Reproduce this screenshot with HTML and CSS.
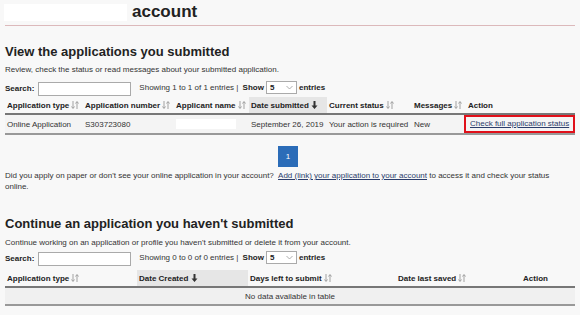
FILE: index.html
```html
<!DOCTYPE html>
<html lang="en">

<head>
    <meta charset="UTF-8">
    <meta name="viewport" content="width=device-width, initial-scale=1.0">
    <title>Account</title>
    <link rel="stylesheet" href="styles.css">
</head>

<body>
    <div class="page">
        <h1 class="page-title"><span class="redacted redacted-name"></span>account</h1>

        <section class="block block-submitted">
            <h2>View the applications you submitted</h2>
            <p class="intro">Review, check the status or read messages about your submitted application.</p>

            <div class="toolbar">
                <label class="search">Search: <input type="text"></label>
                <span class="info">Showing 1 to 1 of 1 entries | <b>Show</b>
                    <span class="select">5<svg width="7" height="5" viewBox="0 0 7 5"><path d="M0.5 1 L3.5 4 L6.5 1" fill="none" stroke="#999" stroke-width="0.8"/></svg></span>
                    <b>entries</b></span>
            </div>

            <table class="grid">
                <colgroup>
                    <col style="width:78px">
                    <col style="width:91px">
                    <col style="width:75px">
                    <col style="width:78px">
                    <col style="width:85px">
                    <col style="width:54px">
                    <col>
                </colgroup>
                <thead>
                    <tr>
                        <th>Application type <svg class="sort" width="8" height="8" viewBox="0 0 8 8"><path d="M2 0 V7 M0.5 5.5 L2 7.5 L3.5 5.5 M6 8 V1 M4.5 2.5 L6 0.5 L7.5 2.5" fill="none" stroke="#999" stroke-width="0.9"/></svg></th>
                        <th>Application number <svg class="sort" width="8" height="8" viewBox="0 0 8 8"><path d="M2 0 V7 M0.5 5.5 L2 7.5 L3.5 5.5 M6 8 V1 M4.5 2.5 L6 0.5 L7.5 2.5" fill="none" stroke="#999" stroke-width="0.9"/></svg></th>
                        <th>Applicant name <svg class="sort" width="8" height="8" viewBox="0 0 8 8"><path d="M2 0 V7 M0.5 5.5 L2 7.5 L3.5 5.5 M6 8 V1 M4.5 2.5 L6 0.5 L7.5 2.5" fill="none" stroke="#999" stroke-width="0.9"/></svg></th>
                        <th class="sorted">Date submitted <svg class="sort" width="7" height="8" viewBox="0 0 7 8"><path d="M2.5 0 H4.5 V4.5 H6.5 L3.5 8 L0.5 4.5 H2.5 Z" fill="#333"/></svg></th>
                        <th>Current status <svg class="sort" width="8" height="8" viewBox="0 0 8 8"><path d="M2 0 V7 M0.5 5.5 L2 7.5 L3.5 5.5 M6 8 V1 M4.5 2.5 L6 0.5 L7.5 2.5" fill="none" stroke="#999" stroke-width="0.9"/></svg></th>
                        <th>Messages <svg class="sort" width="8" height="8" viewBox="0 0 8 8"><path d="M2 0 V7 M0.5 5.5 L2 7.5 L3.5 5.5 M6 8 V1 M4.5 2.5 L6 0.5 L7.5 2.5" fill="none" stroke="#999" stroke-width="0.9"/></svg></th>
                        <th>Action</th>
                    </tr>
                </thead>
                <tbody>
                    <tr>
                        <td>Online Application</td>
                        <td>S303723080</td>
                        <td><span class="redacted redacted-cell"></span></td>
                        <td>September 26, 2019</td>
                        <td>Your action is required</td>
                        <td>New</td>
                        <td class="action"><a href="#" class="highlight">Check full application status</a></td>
                    </tr>
                </tbody>
            </table>

            <div class="pager"><span class="page-btn">1</span></div>

            <p class="note"><span>Did you apply on paper or don't see your online application in your account?</span> <a href="#">Add (link) your application to your account</a> <span>to access it and check your status</span> <span>online.</span></p>
        </section>

        <section class="block block-draft">
            <h2>Continue an application you haven't submitted</h2>
            <p class="intro">Continue working on an application or profile you haven't submitted or delete it from your account.</p>

            <div class="toolbar">
                <label class="search">Search: <input type="text"></label>
                <span class="info">Showing 0 to 0 of 0 entries | <b>Show</b>
                    <span class="select">5<svg width="7" height="5" viewBox="0 0 7 5"><path d="M0.5 1 L3.5 4 L6.5 1" fill="none" stroke="#999" stroke-width="0.8"/></svg></span>
                    <b>entries</b></span>
            </div>

            <table class="grid">
                <colgroup>
                    <col style="width:132px">
                    <col style="width:111px">
                    <col style="width:148px">
                    <col style="width:100px">
                    <col>
                </colgroup>
                <thead>
                    <tr>
                        <th>Application type <svg class="sort" width="8" height="8" viewBox="0 0 8 8"><path d="M2 0 V7 M0.5 5.5 L2 7.5 L3.5 5.5 M6 8 V1 M4.5 2.5 L6 0.5 L7.5 2.5" fill="none" stroke="#999" stroke-width="0.9"/></svg></th>
                        <th class="sorted">Date Created <svg class="sort" width="7" height="8" viewBox="0 0 7 8"><path d="M2.5 0 H4.5 V4.5 H6.5 L3.5 8 L0.5 4.5 H2.5 Z" fill="#333"/></svg></th>
                        <th>Days left to submit <svg class="sort" width="8" height="8" viewBox="0 0 8 8"><path d="M2 0 V7 M0.5 5.5 L2 7.5 L3.5 5.5 M6 8 V1 M4.5 2.5 L6 0.5 L7.5 2.5" fill="none" stroke="#999" stroke-width="0.9"/></svg></th>
                        <th>Date last saved <svg class="sort" width="8" height="8" viewBox="0 0 8 8"><path d="M2 0 V7 M0.5 5.5 L2 7.5 L3.5 5.5 M6 8 V1 M4.5 2.5 L6 0.5 L7.5 2.5" fill="none" stroke="#999" stroke-width="0.9"/></svg></th>
                        <th class="center">Action</th>
                    </tr>
                </thead>
                <tbody>
                    <tr>
                        <td colspan="5" class="empty">No data available in table</td>
                    </tr>
                </tbody>
            </table>
        </section>
    </div>
</body>

</html>
```

FILE: styles.css
```css
body {
    margin: 0;
    background: #f8f8f8;
    font-family: 'Liberation Sans', Arial, sans-serif;
    color: #333;
    font-size: 8px;
}

.page {
    padding: 0 5px 0 5px;
}

.page-title {
    margin: 0;
    padding: 2px 0 3px 0;
    font-size: 17px;
    line-height: 20px;
    color: #222;
    border-bottom: 1px solid #dcb9bb;
    display: flex;
    align-items: center;
}

.redacted {
    display: inline-block;
    background: #fff;
}

.redacted-name {
    width: 123px;
    height: 17px;
    margin-left: -1px;
    margin-right: 5px;
}

.redacted-cell {
    width: 60px;
    height: 10px;
    vertical-align: middle;
}

h2 {
    margin: 17px 0 0 0;
    font-size: 13px;
    line-height: 17px;
    color: #222;
}

.block-draft h2 {
    margin-top: 23px;
}

.intro {
    margin: 4px 0 0 0;
    line-height: 11px;
}

.block-draft .intro {
    margin-top: 5px;
}

.toolbar {
    display: flex;
    align-items: center;
    margin-top: 6px;
    height: 15px;
}

.block-draft .toolbar {
    margin-top: 3px;
}

.search {
    font-weight: bold;
    color: #222;
    display: flex;
    align-items: center;
}

.search input {
    width: 93px;
    height: 14px;
    margin: 0 0 0 4px;
    padding: 0;
    border: 1px solid #aaa;
    background: #fff;
    box-sizing: border-box;
}

.info {
    margin-left: 8px;
    margin-top: -2px;
    display: flex;
    align-items: center;
    gap: 2px;
    white-space: pre;
}

.info b {
    color: #222;
}

.select {
    display: inline-flex;
    align-items: center;
    justify-content: space-between;
    width: 31px;
    height: 13px;
    padding: 0 3px 0 3px;
    box-sizing: border-box;
    border: 1px solid #aaa;
    background: #fff;
    font-weight: bold;
    color: #222;
}

.grid {
    width: 570px;
    border-collapse: collapse;
    table-layout: fixed;
    margin-top: 1px;
}

.block-draft .grid {
    margin-top: 4px;
}

.grid th {
    text-align: left;
    font-weight: bold;
    color: #222;
    height: 16px;
    padding: 0 2px;
    border-bottom: 2px solid #777;
    white-space: nowrap;
}

.grid th.sorted {
    background: #e6e6e6;
}

.grid th.center {
    text-align: center;
}

.grid td {
    height: 18px;
    padding: 0 2px;
    border-bottom: 2px solid #999;
    white-space: nowrap;
    background: #f4f4f4;
}

.grid td.action {
    padding: 0;
}

.highlight {
    display: block;
    margin-left: -2px;
    padding: 2px 0 3px 4px;
    border: 2px solid #e0101a;
    color: #2b3d6b;
}

.grid td.empty {
    text-align: center;
    height: 16px;
    background: #f0f0f0;
}

.sort {
    vertical-align: -1px;
}

.pager {
    display: flex;
    justify-content: center;
    margin-top: 11px;
}

.page-btn {
    width: 20px;
    height: 21px;
    background: #2b6cb8;
    color: #fff;
    display: flex;
    align-items: center;
    justify-content: center;
    margin-right: 4px;
}

.note {
    margin: 3px 0 0 0;
    line-height: 11px;
    max-width: 545px;
}

.note a {
    color: #2b3d6b;
    margin-left: 2px;
}
```
